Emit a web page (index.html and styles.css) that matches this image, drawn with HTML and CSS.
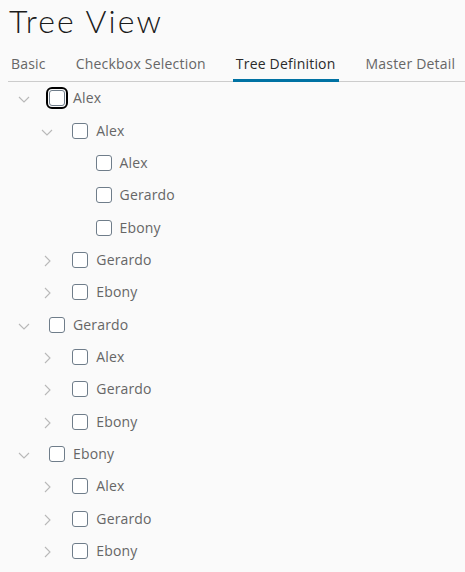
FILE: index.html
```html
<!DOCTYPE html>
<html>
<head>
<meta charset="utf-8">
<link rel="stylesheet" href="styles.css">
</head>
<body>
<div class="page">
  <h1 class="title">Tree View</h1>
  <nav class="tabs">
    <span class="tab">Basic</span>
    <span class="tab">Checkbox Selection</span>
    <span class="tab active">Tree Definition</span>
    <span class="tab">Master Detail</span>
  </nav>
  <div class="tree">
    <div class="node lvl0"><span class="caret"><svg class="down" viewBox="0 0 12 7"><polyline points="1,1 6,6 11,1"/></svg></span><span class="cb focus"></span><span class="label">Alex</span></div>
    <div class="node lvl1"><span class="caret"><svg class="down" viewBox="0 0 12 7"><polyline points="1,1 6,6 11,1"/></svg></span><span class="cb"></span><span class="label">Alex</span></div>
    <div class="node lvl2"><span class="caret"></span><span class="cb"></span><span class="label">Alex</span></div>
    <div class="node lvl2"><span class="caret"></span><span class="cb"></span><span class="label">Gerardo</span></div>
    <div class="node lvl2"><span class="caret"></span><span class="cb"></span><span class="label">Ebony</span></div>
    <div class="node lvl1"><span class="caret"><svg class="right" viewBox="0 0 7 12"><polyline points="1,1 6,6 1,11"/></svg></span><span class="cb"></span><span class="label">Gerardo</span></div>
    <div class="node lvl1"><span class="caret"><svg class="right" viewBox="0 0 7 12"><polyline points="1,1 6,6 1,11"/></svg></span><span class="cb"></span><span class="label">Ebony</span></div>
    <div class="node lvl0"><span class="caret"><svg class="down" viewBox="0 0 12 7"><polyline points="1,1 6,6 11,1"/></svg></span><span class="cb"></span><span class="label">Gerardo</span></div>
    <div class="node lvl1"><span class="caret"><svg class="right" viewBox="0 0 7 12"><polyline points="1,1 6,6 1,11"/></svg></span><span class="cb"></span><span class="label">Alex</span></div>
    <div class="node lvl1"><span class="caret"><svg class="right" viewBox="0 0 7 12"><polyline points="1,1 6,6 1,11"/></svg></span><span class="cb"></span><span class="label">Gerardo</span></div>
    <div class="node lvl1"><span class="caret"><svg class="right" viewBox="0 0 7 12"><polyline points="1,1 6,6 1,11"/></svg></span><span class="cb"></span><span class="label">Ebony</span></div>
    <div class="node lvl0"><span class="caret"><svg class="down" viewBox="0 0 12 7"><polyline points="1,1 6,6 11,1"/></svg></span><span class="cb"></span><span class="label">Ebony</span></div>
    <div class="node lvl1"><span class="caret"><svg class="right" viewBox="0 0 7 12"><polyline points="1,1 6,6 1,11"/></svg></span><span class="cb"></span><span class="label">Alex</span></div>
    <div class="node lvl1"><span class="caret"><svg class="right" viewBox="0 0 7 12"><polyline points="1,1 6,6 1,11"/></svg></span><span class="cb"></span><span class="label">Gerardo</span></div>
    <div class="node lvl1"><span class="caret"><svg class="right" viewBox="0 0 7 12"><polyline points="1,1 6,6 1,11"/></svg></span><span class="cb"></span><span class="label">Ebony</span></div>
  </div>
</div>
</body>
</html>
```
FILE: styles.css
```css
html, body {
  margin: 0;
  padding: 0;
  background: #fafafa;
}
.page {
  padding: 1px 0 0 8px;
  font-family: "Open Sans", "Liberation Sans", sans-serif;
  color: #666;
}
.title {
  margin: 0 0 0 1px;
  font-family: Lato, "Open Sans", sans-serif;
  font-weight: 300;
  font-size: 32px;
  line-height: 40px;
  color: #1b1b1b;
  letter-spacing: 2.1px;
}
.tabs {
  display: flex;
  height: 40px;
  border-bottom: 1px solid #cccccc;
}
.tab {
  height: 41px;
  margin-bottom: -1px;
  margin-right: 24px;
  padding: 13px 3px 0 3px;
  box-sizing: border-box;
  font-size: 14px;
  line-height: 20px;
  color: #666;
  white-space: nowrap;
  letter-spacing: 0.2px;
}
.tab.active {
  color: #2b2b2b;
  box-shadow: inset 0 -3px 0 0 #0072a3;
}
.tree {
  display: flex;
  flex-direction: column;
}
.node {
  display: flex;
  align-items: center;
  height: 32.36px;
  font-size: 14px;
}
.lvl1 { padding-left: 23.3px; }
.lvl2 { padding-left: 46.6px; }
.caret {
  width: 32px;
  flex: none;
  display: flex;
  justify-content: center;
  align-items: center;
}
.caret svg {
  fill: none;
  stroke: #b8b8b8;
  stroke-width: 1.1;
}
.caret .down {
  width: 12px;
  height: 7px;
  margin-top: 3px;
}
.caret .right {
  width: 7px;
  height: 12px;
  margin-top: 2px;
}
.cb {
  flex: none;
  width: 16px;
  height: 16px;
  box-sizing: border-box;
  margin-left: 9px;
  border: 1px solid #6f7d8a;
  border-radius: 3px;
  background: #ffffff;
}
.cb.focus {
  outline: 2px solid #000;
  outline-offset: 1px;
  border-radius: 3px;
}
.label {
  margin-left: 8px;
  color: #666;
  line-height: 20px;
  letter-spacing: 0.15px;
}
```
